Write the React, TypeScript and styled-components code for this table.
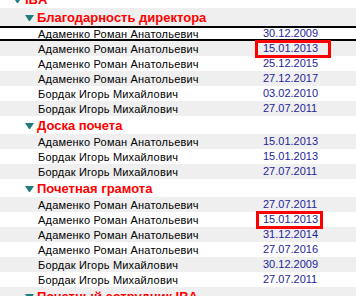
import styled, { createGlobalStyle } from "styled-components";

type Entry = { name: string; date: string; mark?: { left: number; top: number; width: number; height: number } };
type Group = { title: string; entries: Entry[] };

const ADAM = "Адаменко Роман Анатольевич";
const BORD = "Бордак Игорь Михайлович";

const groups: Group[] = [
  {
    title: "Благодарность директора",
    entries: [
      { name: ADAM, date: "30.12.2009" },
      { name: ADAM, date: "15.01.2013", mark: { left: -8, top: -1, width: 76, height: 18 } },
      { name: ADAM, date: "25.12.2015" },
      { name: ADAM, date: "27.12.2017" },
      { name: BORD, date: "03.02.2010" },
      { name: BORD, date: "27.07.2011" },
    ],
  },
  {
    title: "Доска почета",
    entries: [
      { name: ADAM, date: "15.01.2013" },
      { name: BORD, date: "15.01.2013" },
      { name: BORD, date: "27.07.2011" },
    ],
  },
  {
    title: "Почетная грамота",
    entries: [
      { name: ADAM, date: "27.07.2011" },
      { name: ADAM, date: "15.01.2013", mark: { left: -7, top: -1, width: 67, height: 18 } },
      { name: ADAM, date: "31.12.2014" },
      { name: ADAM, date: "27.07.2016" },
      { name: BORD, date: "30.12.2009" },
      { name: BORD, date: "27.07.2011" },
    ],
  },
  { title: "Почетный сотрудник IBA", entries: [] },
];

const GlobalStyle = createGlobalStyle`
  html, body {
    margin: 0;
    padding: 0;
    background: #ffffff;
    overflow: hidden;
  }
`;

export default function App() {
  let idx = 1;
  const rows: React.ReactNode[] = [];
  groups.forEach((g, gi) => {
    rows.push(
      <HeaderRow key={`g${gi}`} $level={1} $odd={idx++ % 2 === 1}>
        <Arrow />
        <HeaderText>{g.title}</HeaderText>
      </HeaderRow>
    );
    g.entries.forEach((e, ei) => {
      rows.push(
        <DataRow key={`g${gi}e${ei}`} $odd={idx++ % 2 === 1} $focused={gi === 0 && ei === 0}>
          <NameCell>{e.name}</NameCell>
          <DateCell>
            {e.date}
            {e.mark && (
              <Mark
                style={{ left: e.mark.left, top: e.mark.top, width: e.mark.width, height: e.mark.height }}
              />
            )}
          </DateCell>
        </DataRow>
      );
    });
  });

  return (
    <>
      <GlobalStyle />
      <Viewport>
        <Tree>
          <HeaderRow $level={0} $odd={false}>
            <Arrow />
            <HeaderText>IBA</HeaderText>
          </HeaderRow>
          {rows}
        </Tree>
      </Viewport>
    </>
  );
}

const Arrow = () => (
  <ArrowSvg width="9" height="6" viewBox="0 0 9 6">
    <polygon points="0,0 9,0 5,6 4,6" fill="#1f7d7d" />
  </ArrowSvg>
);

const Viewport = styled.div`
  width: 356px;
  height: 296px;
  overflow: hidden;
  font-family: "Liberation Sans", Arial, sans-serif;
`;

const Tree = styled.div`
  display: flex;
  flex-direction: column;
  margin-top: -10px;
`;

const HeaderRow = styled.div<{ $level: number; $odd: boolean }>`
  display: flex;
  align-items: center;
  gap: 3px;
  height: 18px;
  padding-left: ${(p) => 13 + p.$level * 12}px;
  background: ${(p) => (p.$odd ? "#efefef" : "#ffffff")};
`;

const ArrowSvg = styled.svg`
  flex: none;
  margin-top: 1px;
`;

const HeaderText = styled.span`
  font-size: 13px;
  font-weight: bold;
  color: #ff0000;
  white-space: nowrap;
`;

const DataRow = styled.div<{ $odd: boolean; $focused: boolean }>`
  display: grid;
  grid-template-columns: 263px 1fr;
  align-items: center;
  height: 15px;
  font-size: 11px;
  background: ${(p) => (p.$odd ? "#efefef" : "#ffffff")};
  box-shadow: ${(p) => (p.$focused ? "inset 0 2px 0 #000000, inset 0 -2px 0 #000000" : "none")};
`;

const NameCell = styled.div`
  padding-left: 38px;
  color: #000000;
  letter-spacing: 0.2px;
  white-space: nowrap;
  overflow: hidden;
`;

const DateCell = styled.div`
  position: relative;
  height: 15px;
  line-height: 15px;
  color: #1e1e9a;
  white-space: nowrap;
`;

const Mark = styled.div`
  position: absolute;
  box-sizing: border-box;
  border: 3px solid #ff0000;
  pointer-events: none;
`;
